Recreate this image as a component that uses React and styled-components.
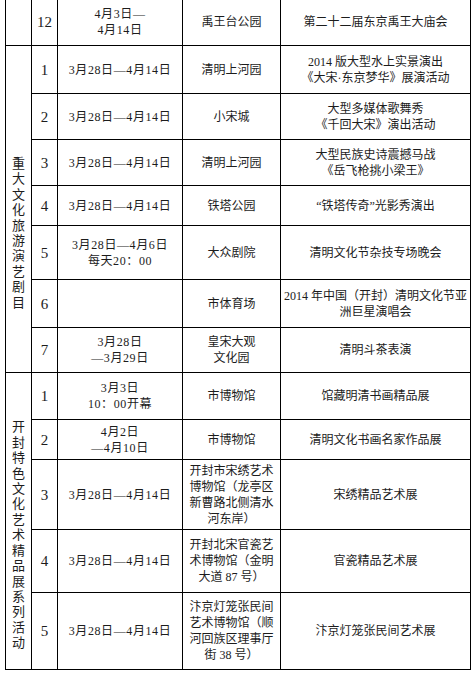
import React from 'react';
import styled, { createGlobalStyle } from 'styled-components';

const GlobalStyle = createGlobalStyle`
    body {
        margin: 0;
        background: #fff;
        font-family: "Liberation Serif", "Noto Sans CJK SC", serif;
        color: #1c1c1c;
    }
`

const Page = styled.div`
    width: 472px;
    height: 676px;
    overflow: hidden;
    background: #fff;
`

const Table = styled.table`
    border-collapse: collapse;
    table-layout: fixed;
    width: 466px;
    margin: -2px 0 0 5px;
    font-size: 12px;
    line-height: 16px;
`

const Row = styled.tr`
    height: ${p => p.h}px;
`

const Cell = styled.td`
    border: 1px solid #000;
    padding: 0 2px;
    text-align: center;
    vertical-align: middle;
    white-space: nowrap;
`

const DateCell = styled(Cell)`
    letter-spacing: 0.6px;
`

const NumCell = styled(Cell)`
    font-size: 15px;
`

const SectionCell = styled(Cell)`
    padding: ${p => p.shift || 0}px 0 0;
`

const VerticalLabel = styled.div`
    width: 13px;
    margin: 0 auto;
    font-size: 13px;
    line-height: 15.4px;
    white-space: normal;
    word-break: break-all;
`

const Lines = ({ children }) => {
    const parts = children.split('\n');
    return parts.map((t, i) => (
        <React.Fragment key={i}>
            {t}
            {i < parts.length - 1 && <br />}
        </React.Fragment>
    ));
};

const sectionOne = [
    { h: 48, n: '1', date: '3月28日—4月14日', place: '清明上河园', event: '2014 版大型水上实景演出\n《大宋·东京梦华》展演活动' },
    { h: 46, n: '2', date: '3月28日—4月14日', place: '小宋城', event: '大型多媒体歌舞秀\n《千回大宋》演出活动' },
    { h: 46, n: '3', date: '3月28日—4月14日', place: '清明上河园', event: '大型民族史诗震撼马战\n《岳飞枪挑小梁王》' },
    { h: 40, n: '4', date: '3月28日—4月14日', place: '铁塔公园', event: '“铁塔传奇”光影秀演出' },
    { h: 54, n: '5', date: '3月28日—4月6日\n每天20：00', place: '大众剧院', event: '清明文化节杂技专场晚会' },
    { h: 48, n: '6', date: '', place: '市体育场', event: '2014 年中国（开封）清明文化节亚\n洲巨星演唱会' },
    { h: 45, n: '7', date: '3月28日\n—3月29日', place: '皇宋大观\n文化园', event: '清明斗茶表演' },
];

const sectionTwo = [
    { h: 47, n: '1', date: '3月3日\n10：00开幕', place: '市博物馆', event: '馆藏明清书画精品展' },
    { h: 40, n: '2', date: '4月2日\n—4月10日', place: '市博物馆', event: '清明文化书画名家作品展' },
    { h: 70, n: '3', date: '3月28日—4月14日', place: '开封市宋绣艺术\n博物馆（龙亭区\n新曹路北侧清水\n河东岸）', event: '宋绣精品艺术展' },
    { h: 63, n: '4', date: '3月28日—4月14日', place: '开封北宋官瓷艺\n术博物馆（金明\n大道 87 号）', event: '官瓷精品艺术展' },
    { h: 77, n: '5', date: '3月28日—4月14日', place: '汴京灯笼张民间\n艺术博物馆（顺\n河回族区理事厅\n街 38 号）', event: '汴京灯笼张民间艺术展' },
];

const Section = ({ label, rows, shift }) => (
    <>
        {rows.map((r, i) => (
            <Row key={r.n} h={r.h}>
                {i === 0 && (
                    <SectionCell rowSpan={rows.length} shift={shift}>
                        <VerticalLabel>{label}</VerticalLabel>
                    </SectionCell>
                )}
                <NumCell>{r.n}</NumCell>
                <DateCell><Lines>{r.date}</Lines></DateCell>
                <Cell><Lines>{r.place}</Lines></Cell>
                <Cell><Lines>{r.event}</Lines></Cell>
            </Row>
        ))}
    </>
);

const App = () => (
    <Page>
        <GlobalStyle />
        <Table>
            <colgroup>
                <col style={{ width: 26 }} />
                <col style={{ width: 26 }} />
                <col style={{ width: 125 }} />
                <col style={{ width: 98 }} />
                <col style={{ width: 190 }} />
            </colgroup>
            <tbody>
                <Row h={47}>
                    <Cell />
                    <NumCell>12</NumCell>
                    <DateCell><Lines>{'4月3日—\n4月14日'}</Lines></DateCell>
                    <Cell>禹王台公园</Cell>
                    <Cell>第二十二届东京禹王大庙会</Cell>
                </Row>
                <Section label="重大文化旅游演艺剧目" rows={sectionOne} shift={48} />
                <Section label="开封特色文化艺术精品展系列活动" rows={sectionTwo} shift={28} />
            </tbody>
        </Table>
    </Page>
);

export default App;
